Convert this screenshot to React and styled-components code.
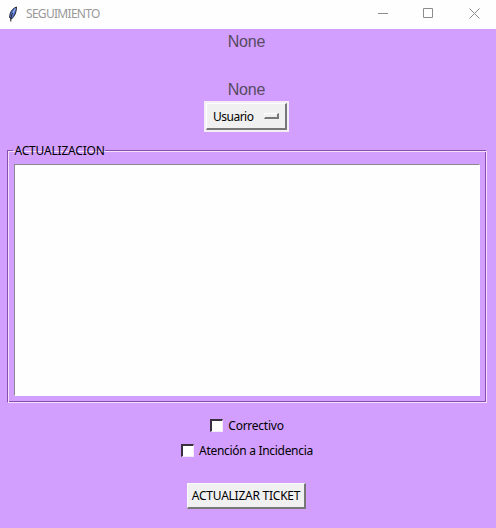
import React from "react";
import styled, { createGlobalStyle } from "styled-components";

const Global = createGlobalStyle`
  * { box-sizing: border-box; }
  body { margin: 0; overflow: hidden; background: #d29fff; }
`;

const Window = styled.div`
  width: 496px;
  height: 528px;
  display: flex;
  flex-direction: column;
  background: #d29fff;
  color: #000;
  font: 12px/16px "Noto Sans", "Open Sans", sans-serif;
`;

const TitleBar = styled.header`
  height: 29px;
  flex: none;
  display: flex;
  align-items: center;
  padding: 0 16px 2px 7px;
  background: #fefefe;
  color: #999;
`;

const Title = styled.span`
  margin-left: 7px;
  flex: 1;
  white-space: nowrap;
  letter-spacing: ${(p) => p.$spacing};
`;

const WindowControls = styled.div`
  display: flex;
  gap: 34px;
  color: #8c8c8c;
`;

const Body = styled.main`
  flex: 1;
  display: flex;
  flex-direction: column;
  align-items: center;
  padding-right: 3px;
`;

const Value = styled.div`
  height: 24px;
  padding-top: 1px;
  margin-bottom: ${(p) => p.$gap || "0"};
  font: 16px/24px "Liberation Sans", Arial, sans-serif;
  letter-spacing: -0.2px;
  color: #564a60;
`;

const OptionMenu = styled.button`
  width: 85px;
  height: 31px;
  padding: 2px;
  display: flex;
  border: 0;
  background: #f4eff6;
  color: inherit;
  font: inherit;
`;

const OptionFace = styled.span`
  width: 81px;
  height: 27px;
  padding: 1px 6px 0;
  display: flex;
  align-items: center;
  justify-content: space-between;
  background: #f0f0f0;
  border: 1px solid #fff;
  border-right: 2px solid #777;
  border-bottom: 2px solid #777;
  letter-spacing: ${(p) => p.$spacing};
`;

const Indicator = styled.span`
  width: 15px;
  height: 6px;
  margin-bottom: 1px;
  border: 1px solid #fff;
  border-right: 2px solid #777;
  border-bottom: 2px solid #777;
`;

const Group = styled.fieldset`
  width: 480px;
  height: 260px;
  margin: 11px 0 0;
  padding: 6px 6px 6px 5px;
  border: 1px solid;
  border-color: #874eb2 #f7dffa #f7dffa #874eb2;
  box-shadow: inset 1px 1px #f7dffa, inset -1px -1px #874eb2;
`;

const Legend = styled.legend`
  height: 15px;
  padding: 0 0 0 2px;
  line-height: 15px;
  white-space: nowrap;
  letter-spacing: ${(p) => p.$spacing};
`;

const TextArea = styled.textarea`
  display: block;
  width: 466px;
  height: 232px;
  margin: 0 0 0 1px;
  padding: 2px;
  resize: none;
  outline: 0;
  background: #fefefe;
  border: 1px solid #fefefe;
  border-top-color: #8d8791;
  border-left-color: #8d8791;
  border-radius: 0;
`;

const Checks = styled.div`
  margin-top: 15px;
  padding-left: 1px;
  display: flex;
  flex-direction: column;
  align-items: center;
  gap: 9px;
`;

const Check = styled.label`
  height: 16px;
  display: flex;
  align-items: center;
  gap: 5px;
  white-space: nowrap;
  letter-spacing: ${(p) => p.$spacing};
`;

const Box = styled.span`
  width: 13px;
  height: 13px;
  margin-bottom: 1px;
  background: #fff;
  border: 2px solid;
  border-color: #39303f #f4eaf8 #f4eaf8 #39303f;
  border-right-width: 1px;
  border-bottom-width: 1px;
`;

const Submit = styled.button`
  width: 119px;
  height: 26px;
  margin-top: 24px;
  padding: 0;
  background: #f0f0f0;
  border: 1px solid #fafafa;
  border-right: 2px solid #777;
  border-bottom: 2px solid #777;
  color: inherit;
  font: inherit;
  white-space: nowrap;
  letter-spacing: ${(p) => p.$spacing};
`;

const Feather = () => (
  <svg width="12" height="18" viewBox="0 0 12 18">
    <path d="M9.500 2C6.500 3 4.200 5.500 3.200 8.500L2.500 12.500l2 1.500C7.500 11.500 9.500 7.500 9.500 2z" fill="#4d6fd0" stroke="#2a2c36" />
    <path d="M8.300 3.500 6.500 7 4 12" fill="none" stroke="#b4c6f0" />
    <path d="M5.500 8 3.800 13v3.500" fill="none" stroke="#15151c" />
  </svg>
);

export default function App() {
  return (
    <Window>
      <Global />
      <TitleBar>
        <Feather />
        <Title $spacing="-0.7px">SEGUIMIENTO</Title>
        <WindowControls>
          <svg width="11" height="11" stroke="currentColor" fill="none"><path d="M0 5.5h10" /></svg>
          <svg width="12" height="11" stroke="currentColor" fill="none"><path d="M.5 .5h9v9h-9z" /></svg>
          <svg width="11" height="11" stroke="currentColor" fill="none"><path d="M.5 .5l10 10M10.500 .5l-10 10" /></svg>
        </WindowControls>
      </TitleBar>
      <Body>
        <Value $gap="24px">None</Value>
        <Value>None</Value>
        <OptionMenu>
          <OptionFace $spacing="-0.5px">
            Usuario
            <Indicator />
          </OptionFace>
        </OptionMenu>
        <Group>
          <Legend $spacing="-0.2px">ACTUALIZACION</Legend>
          <TextArea />
        </Group>
        <Checks>
          <Check $spacing="-0.25px"><Box />Correctivo</Check>
          <Check $spacing="-0.3px"><Box />Atención a Incidencia</Check>
        </Checks>
        <Submit $spacing="-0.25px">ACTUALIZAR TICKET</Submit>
      </Body>
    </Window>
  );
}
